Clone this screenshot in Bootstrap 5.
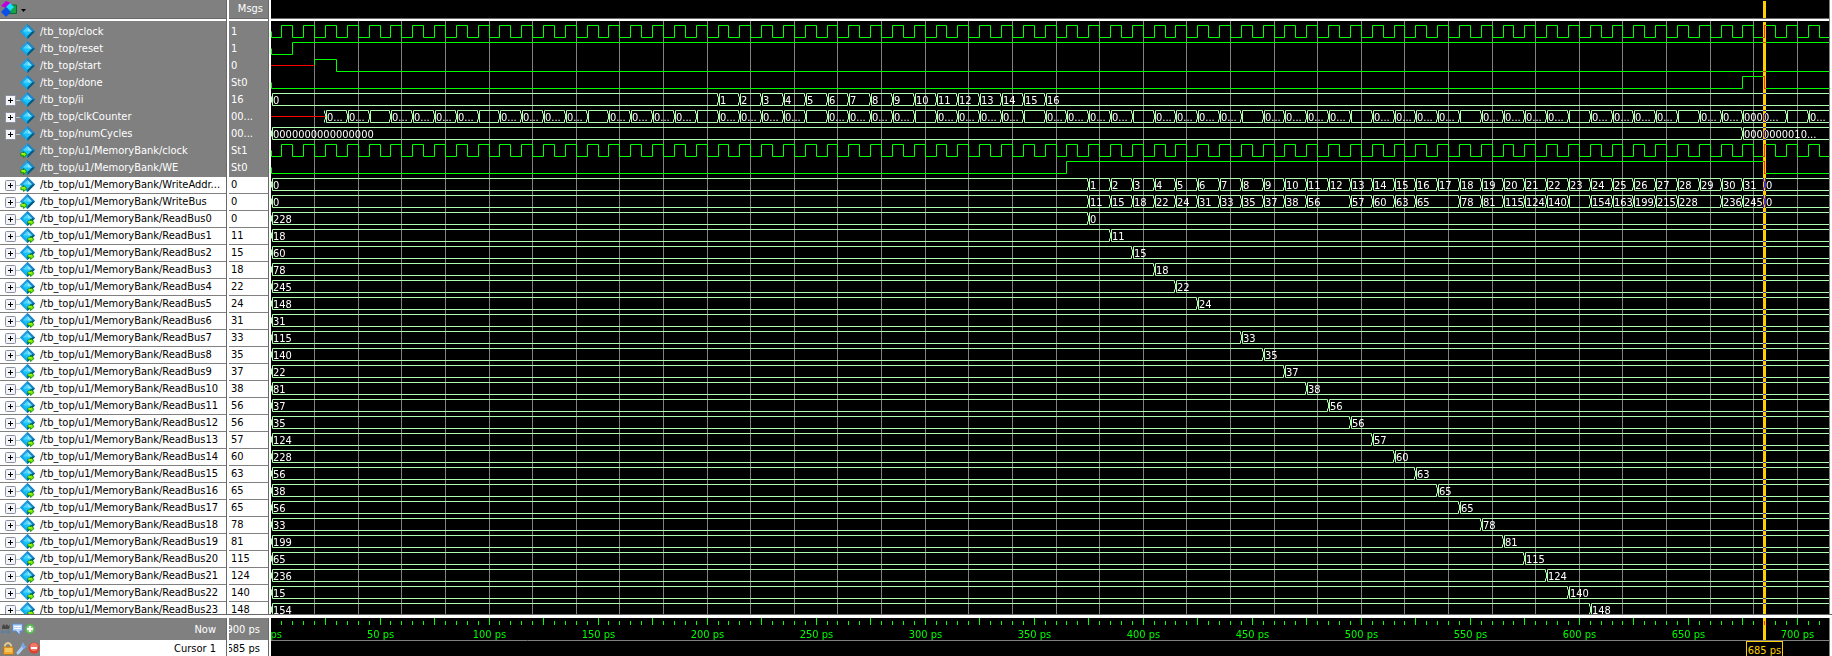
<!DOCTYPE html>
<html lang="en">
<head>
<meta charset="utf-8">
<meta name="viewport" content="width=device-width, initial-scale=1">
<title>Wave</title>
<link href="https://cdn.jsdelivr.net/npm/bootstrap@5.3.0/dist/css/bootstrap.min.css" rel="stylesheet">
<style>
  :root { --panel: #808080; --rule: #686868; --cursor: #ffd000; }
  body { font: 11px/17px "DejaVu Sans Condensed", "DejaVu Sans", sans-serif; background: #fff; color: #000; }
  button { font: inherit; }
  svg { display: block; }
  .signals { width: 271px; table-layout: fixed; border-collapse: separate; border-spacing: 0; }
  .signals .name-col { width: 229px; }
  .signals th, .signals td { padding: 0; font-weight: 400; white-space: nowrap; overflow: hidden; height: 17px; vertical-align: top; }
  .signals thead th { height: 21px; background: var(--panel); color: #fff;
    box-shadow: inset -2px 0 #fff, inset -3px 0 var(--rule), inset 0 -2px #fff, inset 0 -3px var(--rule); }
  .signals tbody th, .signals tbody td { background: #fff;
    box-shadow: inset -2px 0 #fff, inset -3px 0 var(--rule), inset 0 -1px var(--panel); }
  .signals tbody .sel th, .signals tbody .sel td { background: var(--panel); color: #fff; }
  .signals tbody tr:first-child > * { padding-top: 3px; height: 20px; }
  .sig { height: 17px; }
  .label-text { height: 17px; line-height: 15px; }
  .msg-text { padding-left: 2px; }
  .tree { width: 15px; height: 17px; margin-left: 5px; }
  .sigicon { width: 16px; height: 17px; margin-right: 4px; }
  .tool { height: 18px; }
  .wave-head { height: 21px; background: #000; box-shadow: inset 0 -2px #fff, inset 0 -3px var(--rule); }
  .wave-pane { border-right: 1px solid var(--panel); margin-right: 2px; background: #000; }
  .cut { box-shadow: 0 -1px var(--rule); border-top: 3px solid #fff; height: 41px; position: relative; }
  .foot-name { width: 229px; border-right: 2px solid #fff; }
  .foot-msg { width: 42px; border-right: 2px solid #fff; }
  .foot-label { padding-right: 10px; }
  .edge { border-right: 1px solid var(--rule); }
  .now { height: 22px; background: var(--panel); color: #fff; }
  .cur { height: 16px; background: #fff; }
  .foot-icons { width: 40px; height: 16px; background: var(--panel); }
  .grid { stroke: #808080; }
  .logic { stroke: #00ff00; fill: none; }
  .unknown { stroke: #ff0000; fill: none; }
  .bus { stroke: #b0ffb0; fill: none; }
  .val { fill: #fff; }
  .tick { stroke: #00ff00; }
  .time { fill: #00ff00; text-anchor: middle; }
  .cursor-line { fill: var(--cursor); mix-blend-mode: difference; }
  .cursor-box { stroke: var(--cursor); fill: #000; }
  .cursor-text { fill: var(--cursor); text-anchor: middle; }
  .isolate { isolation: isolate; }
</style>
</head>
<body class="vh-100 overflow-hidden d-flex flex-column">

<svg width="0" height="0" class="position-absolute" aria-hidden="true">
  <symbol id="gem" viewBox="0.5 0.5 15 15">
    <path d="M8 .5 15.500 8 8 15.500 .5 8Z" fill="#0a86b8"/>
    <path d="M8 .5V8H.5Z" fill="#2a9fe0"/><path d="M8 .5 15.500 8H8Z" fill="#1c86c8"/><path d="M8 15.500V8H.5Z" fill="#18a8e8"/><path d="M8 15.500 15.500 8H8Z" fill="#07587c"/>
    <path d="M8 3.500 12.500 8 8 12.500 3.500 8Z" fill="#18c4fc"/><path d="M8 3.500 12.500 8H8Z" fill="#8ce8ff"/><path d="M8 3.500V8H3.500Z" fill="#50d8ff"/>
  </symbol>
  <symbol id="arrow" viewBox="0 0 9 8"><path d="M1 3H4V1L8 4.500 4 8V6H1Z" fill="#6cf000" stroke="#0a7800" stroke-width=".9"/><path d="M1.500 3.700H5" stroke="#e8ff30"/></symbol>
</svg>

<main class="d-flex flex-fill overflow-hidden">
  <div class="flex-shrink-0">
    <table class="signals">
      <colgroup><col class="name-col"><col></colgroup>
      <thead><tr>
        <th scope="col">
          <button class="tool d-flex align-items-center border-0 bg-transparent p-0" aria-label="Objects menu">
            <svg width="30" height="18" viewBox="0 0 30 18">
              <path d="M8 5H16.500V13.500H8Z" fill="#17a34a" stroke="#0b6b2b"/>
              <path d="M1 6 6 1 11 3 6 8Z" fill="#c000d8"/>
              <path d="M10 3 14 7 10 11 6 7Z" fill="#16e0ff"/>
              <path d="M6 7 11 12 6 17 1 12Z" fill="#0a50e8"/>
              <path d="M21 9H26L23.500 12Z" fill="#000"/>
            </svg>
          </button>
        </th>
        <th scope="col"><div class="text-end pe-1 me-1">Msgs</div></th>
      </tr></thead>
      <tbody id="rows"></tbody>
    </table>
  </div>
  <section class="wave-pane flex-fill overflow-hidden position-relative isolate" aria-label="Waveforms">
    <div class="wave-head"><svg id="head" width="100%" height="18"></svg></div>
    <svg id="wave" width="100%" height="598"></svg>
  </section>
</main>

<footer class="cut d-flex flex-shrink-0">
  <div class="foot-name">
    <div class="edge">
      <div class="now d-flex align-items-center">
        <svg width="40" height="22" viewBox="0 0 40 22">
          <path d="M2 8 4 6 5 8 7 6 8 8 10 7 9 11H2Z" fill="#484848"/><path d="M1 14H10M3 12 1 14 3 16M8 12 10 14 8 16" stroke="#4a7fb0" fill="none"/>
          <path d="M12.500 6H22.500V13H20V17L16 13H12.500Z" fill="#b8d4f8" stroke="#5a8ad0"/><path d="M14 8.500H21M14 10.500H21" stroke="#fff"/>
          <circle cx="30" cy="11" r="5" fill="#55b555"/><circle cx="30" cy="11" r="3.500" fill="#8cd47e"/><path d="M30 8V14M27 11H33" stroke="#fff" stroke-width="2"/>
        </svg>
        <span class="foot-label ms-auto">Now</span>
      </div>
      <div class="cur d-flex align-items-center">
        <svg class="foot-icons" viewBox="0 0 40 16">
          <path d="M5 8V5Q8 1 11 5V8" fill="none" stroke="#e0c890" stroke-width="2"/><rect x="3.500" y="7" width="10" height="7.500" rx="1" fill="#f0a830" stroke="#b87818"/><path d="M5 9H12M5 11H12" stroke="#ffe090"/>
          <path d="M18 13 23 7" stroke="#a8ccf4" stroke-width="3" stroke-linecap="round"/><path d="M23 2 21 6 24 9 27 6 25 6 24 4Z" fill="#78a8e8"/>
          <circle cx="34" cy="8" r="5.500" fill="#e04030"/><circle cx="34" cy="7" r="4" fill="#f07868"/><path d="M31 8H37" stroke="#fff" stroke-width="2"/>
        </svg>
        <span class="foot-label ms-auto">Cursor 1</span>
      </div>
    </div>
  </div>
  <div class="foot-msg overflow-hidden">
    <div class="edge">
      <div class="now pe-2 d-flex justify-content-end align-items-center text-nowrap">900 ps</div>
      <div class="cur pe-2 d-flex justify-content-end align-items-center text-nowrap">685 ps</div>
    </div>
  </div>
  <div class="wave-pane flex-fill overflow-hidden isolate"><svg id="ruler" width="100%" height="38"></svg></div>
</footer>

<script src="https://cdn.jsdelivr.net/npm/bootstrap@5.3.0/dist/js/bootstrap.bundle.min.js"></script>
<script>
const SCALE = 2.1806, END = 900, ROW = 17, CURSOR = 685;
const X = t => Math.floor(t * SCALE) + 0.5;
const MB = '/tb_top/u1/MemoryBank/';

const clockEdges = [[0, 0]];
for (let t = 5; t < END; t += 5) clockEdges.push([t, t / 5 % 2]);

const ii = [[0, '0']];
for (let k = 1; k <= 16; k++) ii.push([195 + 10 * k, String(k)]);

const counter = [];
for (let t = 25; t < END; t += 10) {
  if (t === CURSOR) continue;
  counter.push([t, t === 675 ? '0000...' : t % 50 === 45 ? '' : '0...']);
}

const addr = [[0, '0']];
for (let k = 1; k <= 31; k++) addr.push([365 + 10 * k, String(k)]);
addr.push([685, '0']);

const written = [[0, '0']];
'11 15 18 22 24 31 33 35 37 38 56 = 57 60 63 65 = 78 81 115 124 140 _ 154 163 199 215 228 = 236 245 0'
  .split(' ').forEach((v, k) => { if (v !== '=') written.push([375 + 10 * k, v === '_' ? '' : v]); });

const signals = [
  { name: '/tb_top/clock', msg: '1', bits: clockEdges },
  { name: '/tb_top/reset', msg: '1', bits: [[0, 0], [10, 1]] },
  { name: '/tb_top/start', msg: '0', bits: [[20, 1], [30, 0]], unknown: 20 },
  { name: '/tb_top/done', msg: 'St0', bits: [[0, 0], [675, 1], [685, 0]] },
  { name: '/tb_top/ii', msg: '16', bus: ii },
  { name: '/tb_top/clkCounter', msg: '00...', bus: counter, unknown: 25 },
  { name: '/tb_top/numCycles', msg: '00...', bus: [[0, '0000000000000000'], [675, '0000000010...']] },
  { name: MB + 'clock', msg: 'St1', bits: clockEdges, dir: 'in' },
  { name: MB + 'WE', msg: 'St0', bits: [[0, 0], [365, 1], [685, 0]], dir: 'in' },
  { name: MB + 'WriteAddr...', msg: '0', bus: addr, dir: 'in' },
  { name: MB + 'WriteBus', msg: '0', bus: written, dir: 'in' }
];
const before = [228,18,60,78,245,148,31,115,140,22,81,37,35,124,228,56,38,56,33,199,65,236,15,154];
const after = [0,11,15,18,22,24,31,33,35,37,38,56,56,57,60,63,65,65,78,81,115,124,140,148];
before.forEach((v, n) => {
  const bus = [[0, String(v)]];
  if (v !== after[n]) bus.push([375 + 10 * n, String(after[n])]);
  signals.push({ name: MB + 'ReadBus' + n, msg: String(after[n]), bus, dir: 'out' });
});

document.getElementById('rows').innerHTML = signals.map((s, i) => `
  <tr class="${i < 9 ? 'sel' : ''}">
    <th scope="row"><div class="sig d-flex align-items-center">
      ${s.bus ? `<button class="tree border-0 bg-transparent p-0" aria-label="Expand">
        <svg width="15" height="17"><path d="M11 8.500H15" stroke="#b8c4cc"/><rect x=".5" y="3.500" width="10" height="10" rx="1" fill="#f4f4f8" stroke="#8890a0"/><path d="M3 8.500H8M5.500 6V11" stroke="#000"/></svg>
      </button>` : '<span class="tree"></span>'}
      <svg class="sigicon" viewBox="0 0 16 17"><use href="#gem" width="15" height="15"/>
      ${s.dir ? `<use href="#arrow" x="${s.dir === 'in' ? 0 : 7}" y="7" width="8" height="8"/>` : ''}</svg>
      <span class="label-text">${s.name}</span>
    </div></th>
    <td><div class="label-text msg-text">${s.msg}</div></td>
  </tr>`).join('');

function drawBits(s, y) {
  const hi = y + 1.5, lo = y + 13.5, mid = y + 7.5;
  let d = `M${X(s.bits[0][0])} ${mid}`;
  s.bits.forEach(([t, v]) => { d += `H${X(t)}V${v ? hi : lo}`; });
  return `<path class="logic" d="${d}H${X(END)}"/>`;
}

function drawBus(s, y) {
  const top = y + 1.5, bot = y + 13.5;
  let d = '', text = '';
  s.bus.forEach(([t, v], i) => {
    const x = X(t), next = i + 1 < s.bus.length ? X(s.bus[i + 1][0]) - 1 : X(END);
    d += `M${x + 1} ${bot}V${top}H${next}M${x + 1} ${bot}H${next}`;
    d += `M${x - 1} ${top}V${top + 3}M${x} ${top + 3}V${bot - 3}M${x - 1} ${bot - 3}V${bot}`;
    if (v) text += `<text class="val" x="${x + 1.5}" y="${y + 12}">${v}</text>`;
  });
  return `<path class="bus" d="${d}"/>${text}`;
}

let wave = '';
for (let t = 20; t < END; t += 20) wave += `<path class="grid" d="M${X(t)} 0V598"/>`;
signals.forEach((s, i) => {
  const y = 3 + i * ROW;
  wave += s.bits ? drawBits(s, y) : drawBus(s, y);
  if (s.unknown) wave += `<path class="unknown" d="M0 ${y + 7.5}H${X(s.unknown)}"/>`;
});
const cx = X(CURSOR) - 1.5;
wave += `<rect class="cursor-line" x="${cx}" y="1" width="3" height="597"/>`;
document.getElementById('wave').innerHTML = wave;
document.getElementById('head').innerHTML = `<rect class="cursor-line" x="${cx}" y="1" width="3" height="17"/>`;

let ruler = '<path class="grid" d="M0 22.5H2000"/>';
for (let t = 5; t < END; t += 5) ruler += `<path class="tick" d="M${X(t)} ${t % 25 ? 3 : 0}V7"/>`;
for (let t = 0; t < END; t += 50) ruler += `<text class="time" x="${X(t)}" y="20">${t} ps</text>`;
ruler += `<rect class="cursor-line" x="${cx}" y="0" width="3" height="22"/>
  <rect class="cursor-box" x="${X(CURSOR) - 18}" y="23.5" width="36" height="20"/>
  <text class="cursor-text" x="${X(CURSOR)}" y="36">${CURSOR} ps</text>`;
document.getElementById('ruler').innerHTML = ruler;
</script>
</body>
</html>
